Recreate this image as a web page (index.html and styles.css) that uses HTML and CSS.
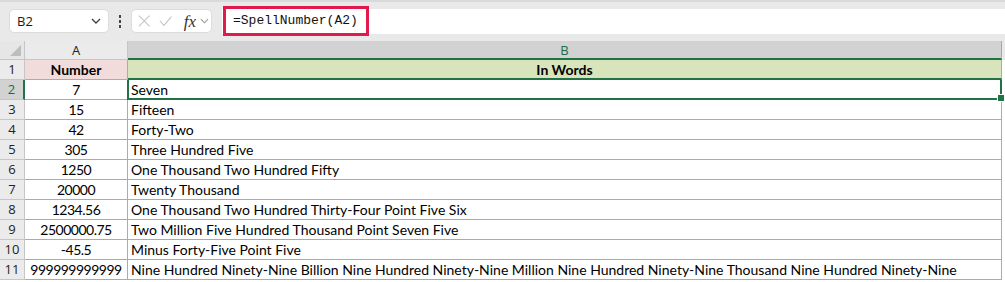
FILE: index.html
```html
<!DOCTYPE html>
<html lang="en">
<head>
    <meta charset="UTF-8">
    <meta name="viewport" content="width=device-width, initial-scale=1.0">
    <link rel="stylesheet" href="styles.css">
</head>

<body>
    <div class="topbar">
        <div class="namebox">
            <span>B2</span>
            <svg width="12" height="8" viewBox="0 0 12 8"><path d="M2 2 L6 6 L10 2" fill="none" stroke="#444" stroke-width="1.4"/></svg>
        </div>
        <div class="dots">
            <span></span><span></span><span></span>
        </div>
        <div class="fxbox">
            <svg width="14" height="14" viewBox="0 0 14 14"><path d="M1 1 L13 13 M13 1 L1 13" stroke="#c4c4c4" stroke-width="1.2"/></svg>
            <svg width="15" height="14" viewBox="0 0 15 14"><path d="M1 7 L5.5 12 L14 2" fill="none" stroke="#c4c4c4" stroke-width="1.2"/></svg>
            <span class="fx">fx</span>
            <svg width="10" height="8" viewBox="0 0 10 8"><path d="M1 2 L5 6 L9 2" fill="none" stroke="#9a9a9a" stroke-width="1.2"/></svg>
        </div>
        <div class="formula">
            <span class="mark">=SpellNumber(A2)</span>
        </div>
    </div>

    <div class="sheet">
        <div class="corner"><span></span></div>
        <div class="colhead">A</div>
        <div class="colhead sel">B</div>
        <div class="edge head"></div>

        <div class="rowhead">1</div>
        <div class="cell num title pink">Number</div>
        <div class="cell title green">In Words</div>
        <div class="edge"></div>

        <div class="rowhead sel">2</div>
        <div class="cell num">7</div>
        <div class="cell active">Seven<span class="handle"></span></div>
        <div class="edge"></div>

        <div class="rowhead">3</div>
        <div class="cell num">15</div>
        <div class="cell">Fifteen</div>
        <div class="edge"></div>

        <div class="rowhead">4</div>
        <div class="cell num">42</div>
        <div class="cell">Forty-Two</div>
        <div class="edge"></div>

        <div class="rowhead">5</div>
        <div class="cell num">305</div>
        <div class="cell">Three Hundred Five</div>
        <div class="edge"></div>

        <div class="rowhead">6</div>
        <div class="cell num">1250</div>
        <div class="cell">One Thousand Two Hundred Fifty</div>
        <div class="edge"></div>

        <div class="rowhead">7</div>
        <div class="cell num">20000</div>
        <div class="cell">Twenty Thousand</div>
        <div class="edge"></div>

        <div class="rowhead">8</div>
        <div class="cell num">1234.56</div>
        <div class="cell">One Thousand Two Hundred Thirty-Four Point Five Six</div>
        <div class="edge"></div>

        <div class="rowhead">9</div>
        <div class="cell num">2500000.75</div>
        <div class="cell">Two Million Five Hundred Thousand Point Seven Five</div>
        <div class="edge"></div>

        <div class="rowhead">10</div>
        <div class="cell num">-45.5</div>
        <div class="cell">Minus Forty-Five Point Five</div>
        <div class="edge"></div>

        <div class="rowhead">11</div>
        <div class="cell num">999999999999</div>
        <div class="cell">Nine Hundred Ninety-Nine Billion Nine Hundred Ninety-Nine Million Nine Hundred Ninety-Nine Thousand Nine Hundred Ninety-Nine</div>
        <div class="edge"></div>
    </div>
</body>

</html>
```

FILE: styles.css
```css
body {
    margin: 0;
    padding: 0;
    background: #ffffff;
    font-family: Lato, "Liberation Sans", sans-serif;
    overflow: hidden;
}

.topbar {
    height: 41px;
    box-sizing: border-box;
    background: #e9e9e9;
    border-top: 2px solid #d9d9d9;
    display: flex;
    align-items: center;
    padding: 0 0 1px 9px;
}

.namebox {
    width: 100px;
    height: 24px;
    box-sizing: border-box;
    background: #fff;
    border: 1px solid #dcdcdc;
    border-radius: 5px;
    display: flex;
    align-items: center;
    justify-content: space-between;
    padding: 0 6px 0 7px;
    font-family: "Open Sans", "Noto Sans", sans-serif;
    font-size: 13px;
    color: #1a1a1a;
}

.dots {
    width: 22px;
    display: flex;
    flex-direction: column;
    align-items: center;
    gap: 2px;
}

.dots span {
    width: 2px;
    height: 3px;
    background: #444;
}

.fxbox {
    width: 81px;
    height: 24px;
    box-sizing: border-box;
    background: #fff;
    border: 1px solid #dcdcdc;
    border-radius: 5px;
    display: flex;
    align-items: center;
    gap: 9px;
    padding: 0 2px 0 6px;
}

.fxbox .fx {
    font-family: "Liberation Serif", serif;
    font-style: italic;
    font-size: 17px;
    color: #333;
    margin-left: 2px;
    margin-right: -5px;
    line-height: 1;
}

.formula {
    flex: 1;
    height: 25px;
    margin-left: 10px;
    background: #fff;
    display: flex;
    align-items: center;
}

.mark {
    display: inline-block;
    height: 30px;
    box-sizing: border-box;
    border: 3px solid #e21a4c;
    padding: 4px 8px 0 7px;
    margin-left: 1px;
    font-family: "Liberation Mono", monospace;
    font-size: 13px;
    color: #111;
}

.sheet {
    display: grid;
    grid-template-columns: 25px 103px 874px 1fr;
    grid-template-rows: 19px repeat(11, 20px);
    font-size: 14px;
    color: #000;
}

.corner {
    background: #e6e6e6;
    border-right: 1px solid #c6c6c6;
    border-bottom: 1px solid #c6c6c6;
    position: relative;
}

.corner span {
    position: absolute;
    right: 3px;
    bottom: 3px;
    width: 0;
    height: 0;
    border-left: 11px solid transparent;
    border-bottom: 11px solid #bdbdbd;
}

.colhead {
    background: #ebebeb;
    border-right: 1px solid #c6c6c6;
    border-bottom: 1px solid #c6c6c6;
    display: flex;
    align-items: center;
    justify-content: center;
    font-family: "Open Sans", "Noto Sans", sans-serif;
    font-size: 13px;
    color: #222;
}

.colhead.sel {
    background: #d2d2d2;
    color: #1e6b44;
    border-bottom: 2px solid #217346;
    border-right: 1px solid #a8a8a8;
}

.edge {
    background: #fff;
}

.edge.head {
    background: #e9e9e9;
}

.rowhead {
    background: #ebebeb;
    border-right: 1px solid #c6c6c6;
    border-bottom: 1px solid #c6c6c6;
    display: flex;
    align-items: flex-end;
    justify-content: center;
    padding-bottom: 1px;
    font-family: "Open Sans", "Noto Sans", sans-serif;
    font-size: 13px;
    color: #222;
}

.rowhead.sel {
    background: #d2d2d2;
    color: #1e6b44;
    border-right: 2px solid #217346;
}

.cell {
    border-right: 1px solid #ababab;
    border-bottom: 1px solid #ababab;
    display: flex;
    align-items: flex-end;
    padding: 0 3px 2px;
    white-space: nowrap;
    line-height: 1;
}

.cell.num {
    justify-content: center;
    letter-spacing: -0.5px;
}

.cell.title {
    font-weight: bold;
    justify-content: center;
    letter-spacing: 0;
}

.pink {
    background: #f2dcdb;
}

.green {
    background: #d8e4bc;
    border-bottom: 2px solid #217346;
    padding-bottom: 1px;
}

.cell.active {
    position: relative;
    border: 2px solid #217346;
    border-top: none;
    margin-left: -1px;
    padding-left: 2px;
    padding-bottom: 1px;
}

.handle {
    position: absolute;
    right: -5px;
    bottom: -4px;
    width: 6px;
    height: 6px;
    background: #217346;
    border: 1px solid #fff;
}
```
